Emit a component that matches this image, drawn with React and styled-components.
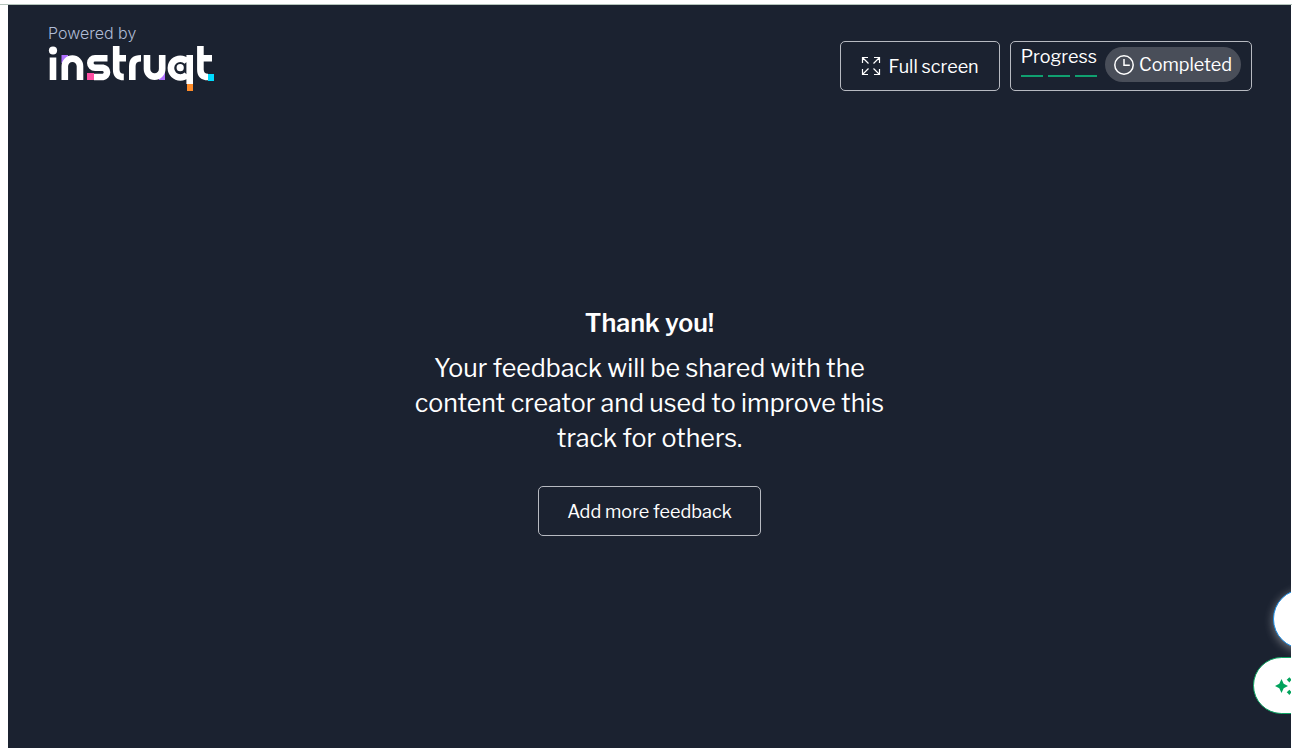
import React from "react";
import styled, { createGlobalStyle } from "styled-components";

const GlobalStyle = createGlobalStyle`
  *, *::before, *::after { box-sizing: border-box; }
  html, body { margin: 0; background: #fff; }
  body { font-family: "Libre Franklin", "Liberation Sans", Arial, sans-serif; color: #fff; }
  h1, p { margin: 0; }
`;

const Page = styled.div`
  display: flex;
  flex-direction: column;
  min-height: 100vh;
  padding-top: 4px;
`;

const Frame = styled.div`
  position: relative;
  flex: 1;
  display: flex;
  flex-direction: column;
  overflow: hidden;
  margin: 0 1px 0 8px;
  background: #1b2230;
`;

const TopRule = styled.div`
  height: 1px;
  background: #b4c4bb;
`;

const Header = styled.header`
  display: flex;
  align-items: flex-start;
  justify-content: space-between;
  padding: 18px 39px 0 40px;
`;

const Brand = styled.a`
  display: flex;
  flex-direction: column;
  color: #b0bcd6;
  font: 300 16px/20px Inter, sans-serif;
  text-decoration: none;
`;

const Actions = styled.div`
  display: flex;
  gap: 10px;
  padding-top: 18px;
`;

const OutlineButton = styled.button`
  display: inline-flex;
  align-items: center;
  justify-content: center;
  gap: 8px;
  height: 50px;
  padding: 0 ${(p) => (p.$wide ? 28 : 20)}px;
  border: 1px solid #b7bac1;
  border-radius: 5px;
  background: transparent;
  color: #fff;
  font-family: inherit;
  font-size: 18px;
  line-height: 24px;
  white-space: nowrap;
  cursor: pointer;
`;

const Label = styled.span`
  padding-top: 2px;
`;

const ProgressBox = styled.div`
  display: flex;
  align-items: flex-start;
  gap: 8px;
  height: 50px;
  padding: 5px 10px;
  border: 1px solid #b7bac1;
  border-radius: 5px;
  font-size: 18px;
  line-height: 20px;
`;

const Steps = styled.div`
  display: flex;
  gap: 5px;
  padding-top: 8px;
`;

const Step = styled.span`
  flex: 1;
  height: 2px;
  background: #10a070;
`;

const Status = styled.div`
  display: flex;
  align-items: center;
  gap: 5px;
  height: 35px;
  padding: 0 9px;
  border-radius: 18px;
  background: #494e59;
`;

const Main = styled.main`
  flex: 1;
  display: flex;
  flex-direction: column;
  align-items: center;
  justify-content: center;
  text-align: center;
`;

const Title = styled.h1`
  font-size: 25px;
  line-height: 35px;
  font-weight: 600;
`;

const Message = styled.p`
  max-width: 500px;
  padding: 10px 0 30px;
  font-size: 25px;
  line-height: 35px;
`;

const Bubble = styled.button`
  position: absolute;
  right: ${(p) => p.$right}px;
  bottom: ${(p) => p.$bottom}px;
  display: flex;
  align-items: center;
  width: ${(p) => p.$width}px;
  height: ${(p) => p.$height}px;
  padding: 0 0 0 21px;
  border: 1px solid ${(p) => p.$color};
  border-radius: 30px;
  background: #fff;
  box-shadow: ${(p) => (p.$glow ? "0 2px 10px rgba(255, 255, 255, 0.4)" : "none")};
  cursor: pointer;
`;

const Logo = () => (
  <svg width="168" height="50" viewBox="48 43 168 50" role="img" aria-label="instruqt">
    <path fill="#b070ff" d="M61.5 55H68v8h-6.5zM159 72h6v8h-6z" />
    <path fill="#ff4fa3" d="M87 73h7v7h-7z" />
    <path fill="#ff8c29" d="M187 84h6v7h-6z" />
    <path fill="#00dcff" d="M208 74h6v7h-6z" />
    <g fill="none" stroke="#fff" strokeWidth="6.6">
      <path d="M53 57.5V80" />
      <path d="M64.8 80V66.2a7.6 7.6 0 0 1 15.2 0V80" />
      <path d="M107.5 58.3H95a4.7 4.7 0 0 0 0 9.4h8a4.7 4.7 0 0 1 0 9.3h-9" />
      <path d="M116.2 46v23.5q0 7.5 7.6 7.5M116 58.3h10" />
      <path d="M132.3 80V66q0-7.7 8.7-7.7" />
      <path d="M147 55v14a7.6 7.6 0 0 0 15.2 0V55" />
      <path d="M187 61.5a9.4 9.4 0 1 0 0 13.2M189.7 55v29" />
      <path d="M200.4 46v23.5q0 7.5 7.6 7.5M200 58.3h12" />
    </g>
    <circle cx="53" cy="50.5" r="4.1" fill="#fff" />
    <circle cx="180.2" cy="67.7" r="3.6" fill="#fff" />
  </svg>
);

const ExpandIcon = () => (
  <svg width="20" height="20" viewBox="0 0 20 20" fill="none" stroke="#fff" strokeWidth="1.2" aria-hidden="true">
    <path d="M1.5 7V1.5H7M1.5 1.5l6 6M13 1.5h5.5V7M18.5 1.5l-6 6M1.5 13v5.5H7M1.5 18.5l6-6M13 18.5h5.5V13M18.5 18.5l-6-6" />
  </svg>
);

const ClockIcon = () => (
  <svg width="20" height="20" viewBox="0 0 20 20" fill="none" stroke="#fff" strokeWidth="1.5" aria-hidden="true">
    <circle cx="10" cy="10" r="9.2" />
    <path d="M10 4v6.2h5.8" />
  </svg>
);

const SparkleIcon = () => (
  <svg width="20" height="20" viewBox="0 0 20 20" fill="#00a35c" aria-hidden="true">
    <path d="M6.5 3L8.7 7.8L13 10L8.7 12.2L6.5 17L4.300 12.200L0 10L4.300 7.800Z" />
    <path d="M14.3 1.2L15.5 2.6L16.9 3.8L15.5 5L14.3 6.4L13.1 5L11.7 3.8L13.1 2.6ZM14.3 13.700L15.500 15.100L16.900 16.300L15.500 17.500L14.300 18.900L13.100 17.500L11.700 16.300L13.100 15.100Z" />
  </svg>
);

export default function App() {
  return (
    <>
      <GlobalStyle />
      <Page>
        <TopRule />
        <Frame>
          <Header>
            <Brand href="#">
              <span>Powered by</span>
              <Logo />
            </Brand>
            <Actions>
              <OutlineButton type="button">
                <ExpandIcon />
                <Label>Full screen</Label>
              </OutlineButton>
              <ProgressBox>
                <div>
                  <span>Progress</span>
                  <Steps>
                    <Step />
                    <Step />
                    <Step />
                  </Steps>
                </div>
                <Status>
                  <ClockIcon />
                  <span>Completed</span>
                </Status>
              </ProgressBox>
            </Actions>
          </Header>
          <Main>
            <Title>Thank you!</Title>
            <Message>
              Your feedback will be shared with the content creator and used to improve this track for others.
            </Message>
            <OutlineButton type="button" $wide>
              <Label>Add more feedback</Label>
            </OutlineButton>
          </Main>
          <Bubble type="button" aria-label="Chat" $right={-42} $bottom={99} $width={60} $height={60} $color="#1e90e8" $glow />
          <Bubble type="button" aria-label="Assistant" $right={-62} $bottom={34} $width={100} $height={57} $color="#0ea564">
            <SparkleIcon />
          </Bubble>
        </Frame>
      </Page>
    </>
  );
}
